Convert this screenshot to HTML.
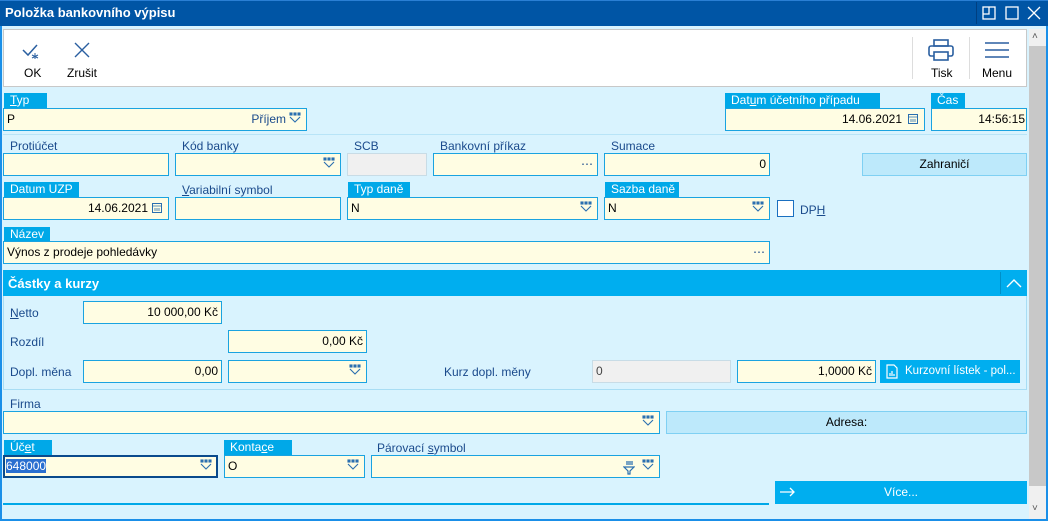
<!DOCTYPE html>
<html><head><meta charset="utf-8"><style>
*{box-sizing:border-box;margin:0;padding:0}
body{width:1048px;height:521px;overflow:hidden;background:#d9f3fe;font-family:"Liberation Sans",sans-serif;font-size:12px;color:#000;position:relative}
.a{position:absolute}
.t{position:absolute;color:#1a4a8c;font-size:12px;white-space:nowrap}
.lb{position:absolute;background:#00a8e8;color:#fff;height:15px;padding:0 6px;font-size:12px;line-height:15px;white-space:nowrap}
.in{position:absolute;background:#fffde3;border:1px solid #1aa3e0;height:23px;line-height:21px;padding:0 3px;font-size:12px;white-space:nowrap;overflow:hidden}
.r{text-align:right}
.btn{position:absolute;background:#bde9fb;border:1px solid #7fd0f3;text-align:center;line-height:21px;height:23px;font-size:12px}
.bb{position:absolute;background:#00aeef;color:#fff;height:23px;line-height:23px;font-size:12px;white-space:nowrap;overflow:hidden;text-overflow:ellipsis}
</style></head><body>
<div class="a" style="left:0;top:0;width:1048px;height:26px;background:#0055a5;border-top:1px solid #2a7fd4"></div>
<div class="a" style="left:5px;top:5px;color:#fff;font-weight:bold;font-size:13px">Položka bankovního výpisu</div>
<div class="a" style="left:976px;top:2px;width:1px;height:22px;background:#003f80"></div>
<svg class="a" style="left:982px;top:6px" width="60" height="16" viewBox="0 0 60 16" fill="none" stroke="#fff" stroke-width="1.3"><rect x="1" y="1" width="12" height="12"/><path d="M1 8H7V1"/><rect x="24" y="1" width="12" height="12"/><path d="M46 1L58 13M58 1L46 13"/></svg>
<div class="a" style="left:0;top:26px;width:1048px;height:495px;border:2px solid #1a8fe8;border-top:none"></div>
<div class="a" style="left:3px;top:29px;width:1024px;height:58px;background:#fff;border:1px solid #c8c8c8"></div>
<svg class="a" style="left:22px;top:42px" width="22" height="18" viewBox="0 0 22 18" fill="none" stroke="#2a5fa0" stroke-width="1.5"><path d="M1 8L6 13L15 3"/><path d="M13 11v6M10 13l6 3M16 13l-6 3" stroke-width="1"/></svg>
<div class="a" style="left:24px;top:66px">OK</div>
<svg class="a" style="left:74px;top:42px" width="16" height="16" viewBox="0 0 16 16" stroke="#2a5fa0" stroke-width="1.4"><path d="M1 1L15 15M15 1L1 15"/></svg>
<div class="a" style="left:67px;top:66px">Zrušit</div>
<div class="a" style="left:912px;top:37px;width:1px;height:42px;background:#ddd"></div>
<div class="a" style="left:969px;top:37px;width:1px;height:42px;background:#ddd"></div>
<svg class="a" style="left:928px;top:39px" width="26" height="22" viewBox="0 0 26 22" fill="none" stroke="#2a5fa0" stroke-width="1.6"><rect x="6" y="1" width="14" height="6"/><rect x="1" y="7" width="24" height="10" rx="2"/><rect x="6" y="13" width="14" height="8" fill="#fff"/></svg>
<div class="a" style="left:931px;top:66px">Tisk</div>
<svg class="a" style="left:985px;top:42px" width="24" height="16" stroke="#2a5fa0" stroke-width="1.5"><path d="M0 1H24M0 8H24M0 15H24"/></svg>
<div class="a" style="left:982px;top:66px">Menu</div>
<div class="a" style="left:1029px;top:29px;width:17px;height:490px;background:#f0f0f0"></div>
<div class="a" style="left:1029px;top:46px;width:17px;height:440px;background:#c8c8c8"></div>
<div class="a" style="left:1032px;top:31px;font-size:10px;color:#555">˄</div>
<div class="a" style="left:1032px;top:503px;font-size:10px;color:#555">˅</div>

<div class="lb" style="left:4px;top:93px;width:43px"><u>T</u>yp</div>
<div class="in" style="left:3px;top:108px;width:304px">P<span style="position:absolute;right:20px;color:#1a4a8c">Příjem</span></div>
<div class="lb" style="left:725px;top:93px;width:155px">Dat<u>u</u>m účetního případu</div>
<div class="in r" style="left:725px;top:108px;width:200px;padding-right:22px">14.06.2021</div>
<div class="lb" style="left:931px;top:93px;width:34px">Čas</div>
<div class="in r" style="left:931px;top:108px;width:96px;padding-right:1px">14:56:15</div>
<div class="a" style="left:3px;top:134px;width:1024px;height:1px;background:#b8e4f7"></div>

<div class="t" style="left:10px;top:139px">Protiúčet</div>
<div class="in" style="left:3px;top:153px;width:166px"></div>
<div class="t" style="left:182px;top:139px">Kód banky</div>
<div class="in" style="left:175px;top:153px;width:166px"></div>
<div class="t" style="left:354px;top:139px">SCB</div>
<div class="in" style="left:347px;top:153px;width:80px;background:#f0f0f0;border-color:#c8dce6"></div>
<div class="t" style="left:440px;top:139px">Bankovní příkaz</div>
<div class="in" style="left:433px;top:153px;width:165px"><span style="position:absolute;right:4px;color:#1a4a8c">⋯</span></div>
<div class="t" style="left:611px;top:139px">Sumace</div>
<div class="in r" style="left:604px;top:153px;width:166px">0</div>
<div class="btn" style="left:862px;top:153px;width:165px">Zahraničí</div>

<div class="lb" style="left:4px;top:182px;width:75px">Datum UZP</div>
<div class="in r" style="left:3px;top:197px;width:166px;padding-right:20px">14.06.2021</div>
<div class="t" style="left:182px;top:183px"><u>V</u>ariabilní symbol</div>
<div class="in" style="left:175px;top:197px;width:166px"></div>
<div class="lb" style="left:348px;top:182px;width:62px">Typ daně</div>
<div class="in" style="left:347px;top:197px;width:251px">N</div>
<div class="lb" style="left:605px;top:182px;width:74px">Sazba daně</div>
<div class="in" style="left:604px;top:197px;width:166px">N</div>
<div class="a" style="left:777px;top:200px;width:17px;height:17px;background:#fff;border:1px solid #1a6fc0"></div>
<div class="t" style="left:800px;top:203px">DP<u>H</u></div>

<div class="lb" style="left:4px;top:227px;width:46px">Název</div>
<div class="in" style="left:3px;top:241px;width:767px">Výnos z prodeje pohledávky<span style="position:absolute;right:4px;color:#1a4a8c">⋯</span></div>

<div class="a" style="left:3px;top:270px;width:1024px;height:26px;background:#00aeef"></div>
<div class="a" style="left:8px;top:276px;color:#fff;font-weight:bold;font-size:13px">Částky a kurzy</div>
<div class="a" style="left:1000px;top:272px;width:1px;height:22px;background:#0090c8"></div>
<svg class="a" style="left:1006px;top:278px" width="16" height="10" fill="none" stroke="#fff" stroke-width="1.4"><path d="M1 9L8 2L15 9"/></svg>
<div class="a" style="left:3px;top:296px;width:1024px;height:94px;border:1px solid #a8ddf4;border-top:none"></div>
<div class="t" style="left:10px;top:306px"><u>N</u>etto</div>
<div class="in r" style="left:83px;top:301px;width:139px">10 000,00 Kč</div>
<div class="t" style="left:10px;top:335px">Rozdíl</div>
<div class="in r" style="left:228px;top:330px;width:139px">0,00 Kč</div>
<div class="t" style="left:10px;top:365px">Dopl. měna</div>
<div class="in r" style="left:83px;top:360px;width:139px">0,00</div>
<div class="in" style="left:228px;top:360px;width:139px"></div>
<div class="t" style="left:444px;top:365px">Kurz dopl. měny</div>
<div class="in" style="left:592px;top:360px;width:139px;background:#f0f0f0;border-color:#c8dce6;color:#444">0</div>
<div class="in r" style="left:737px;top:360px;width:139px">1,0000 Kč</div>
<div class="bb" style="left:880px;top:360px;width:140px;padding-left:25px;padding-right:2px;font-size:11.5px">Kurzovní lístek - pol...</div>
<svg class="a" style="left:886px;top:364px" width="12" height="15" fill="none" stroke="#fff" stroke-width="1.2"><path d="M1 1H8L11 4V14H1Z"/><path d="M4 12V9M6 12V7M8 12V10"/></svg>

<div class="t" style="left:10px;top:397px">Firma</div>
<div class="in" style="left:3px;top:411px;width:657px"></div>
<div class="btn" style="left:666px;top:411px;width:361px">Adresa:</div>

<div class="lb" style="left:4px;top:440px;width:48px">Úč<u>e</u>t</div>
<div class="in" style="left:3px;top:455px;width:215px;border:2px solid #0a4a8c;padding-left:1px;line-height:19px"><span style="background:#2a6fd0;color:#fff">648000</span></div>
<div class="lb" style="left:224px;top:440px;width:68px">Konta<u>c</u>e</div>
<div class="in" style="left:224px;top:455px;width:141px">O</div>
<div class="t" style="left:377px;top:441px">Párovací <u>s</u>ymbol</div>
<div class="in" style="left:371px;top:455px;width:289px"></div>
<svg class="a" style="left:623px;top:461px" width="12" height="14" fill="none" stroke="#2a6fb0" stroke-width="1.2"><path d="M3 1H10M3 3H10M1 6H11L7 10V13H5V10Z"/></svg>

<div class="bb" style="left:775px;top:481px;width:252px;text-align:center">Více...</div>
<svg class="a" style="left:780px;top:487px" width="16" height="10" fill="none" stroke="#fff" stroke-width="1.3"><path d="M0 5H14M10 1L14 5L10 9"/></svg>
<div class="a" style="left:3px;top:503px;width:766px;height:2px;background:#00a8e8"></div>

<svg width="0" height="0" style="position:absolute"><defs><g id="dd" fill="none" stroke="#2a6fb0" stroke-width="1.1"><rect x="1" y="1" width="2" height="2" fill="#2a6fb0"/><rect x="5" y="1" width="2" height="2" fill="#2a6fb0"/><rect x="9" y="1" width="2" height="2" fill="#2a6fb0"/><path d="M1 5L6 10L11 5"/></g></defs></svg>
<svg class="a" style="left:289px;top:112px" width="12" height="12"><use href="#dd"/></svg>
<svg class="a" style="left:323px;top:157px" width="12" height="12"><use href="#dd"/></svg>
<svg class="a" style="left:580px;top:201px" width="12" height="12"><use href="#dd"/></svg>
<svg class="a" style="left:752px;top:201px" width="12" height="12"><use href="#dd"/></svg>
<svg class="a" style="left:349px;top:364px" width="12" height="12"><use href="#dd"/></svg>
<svg class="a" style="left:642px;top:415px" width="12" height="12"><use href="#dd"/></svg>
<svg class="a" style="left:200px;top:459px" width="12" height="12"><use href="#dd"/></svg>
<svg class="a" style="left:347px;top:459px" width="12" height="12"><use href="#dd"/></svg>
<svg class="a" style="left:642px;top:459px" width="12" height="12"><use href="#dd"/></svg>
<svg class="a" style="left:151px;top:202px" width="12" height="12" fill="none" stroke="#2a6fb0"><rect x="1.5" y="1.5" width="9" height="9"/><path d="M1.5 4H10.5M4 6v3M6 6v3M8 6v3" stroke-width="0.8"/></svg>
<svg class="a" style="left:907px;top:113px" width="12" height="12" fill="none" stroke="#2a6fb0"><rect x="1.5" y="1.5" width="9" height="9"/><path d="M1.5 4H10.5M4 6v3M6 6v3M8 6v3" stroke-width="0.8"/></svg>
</body></html>
